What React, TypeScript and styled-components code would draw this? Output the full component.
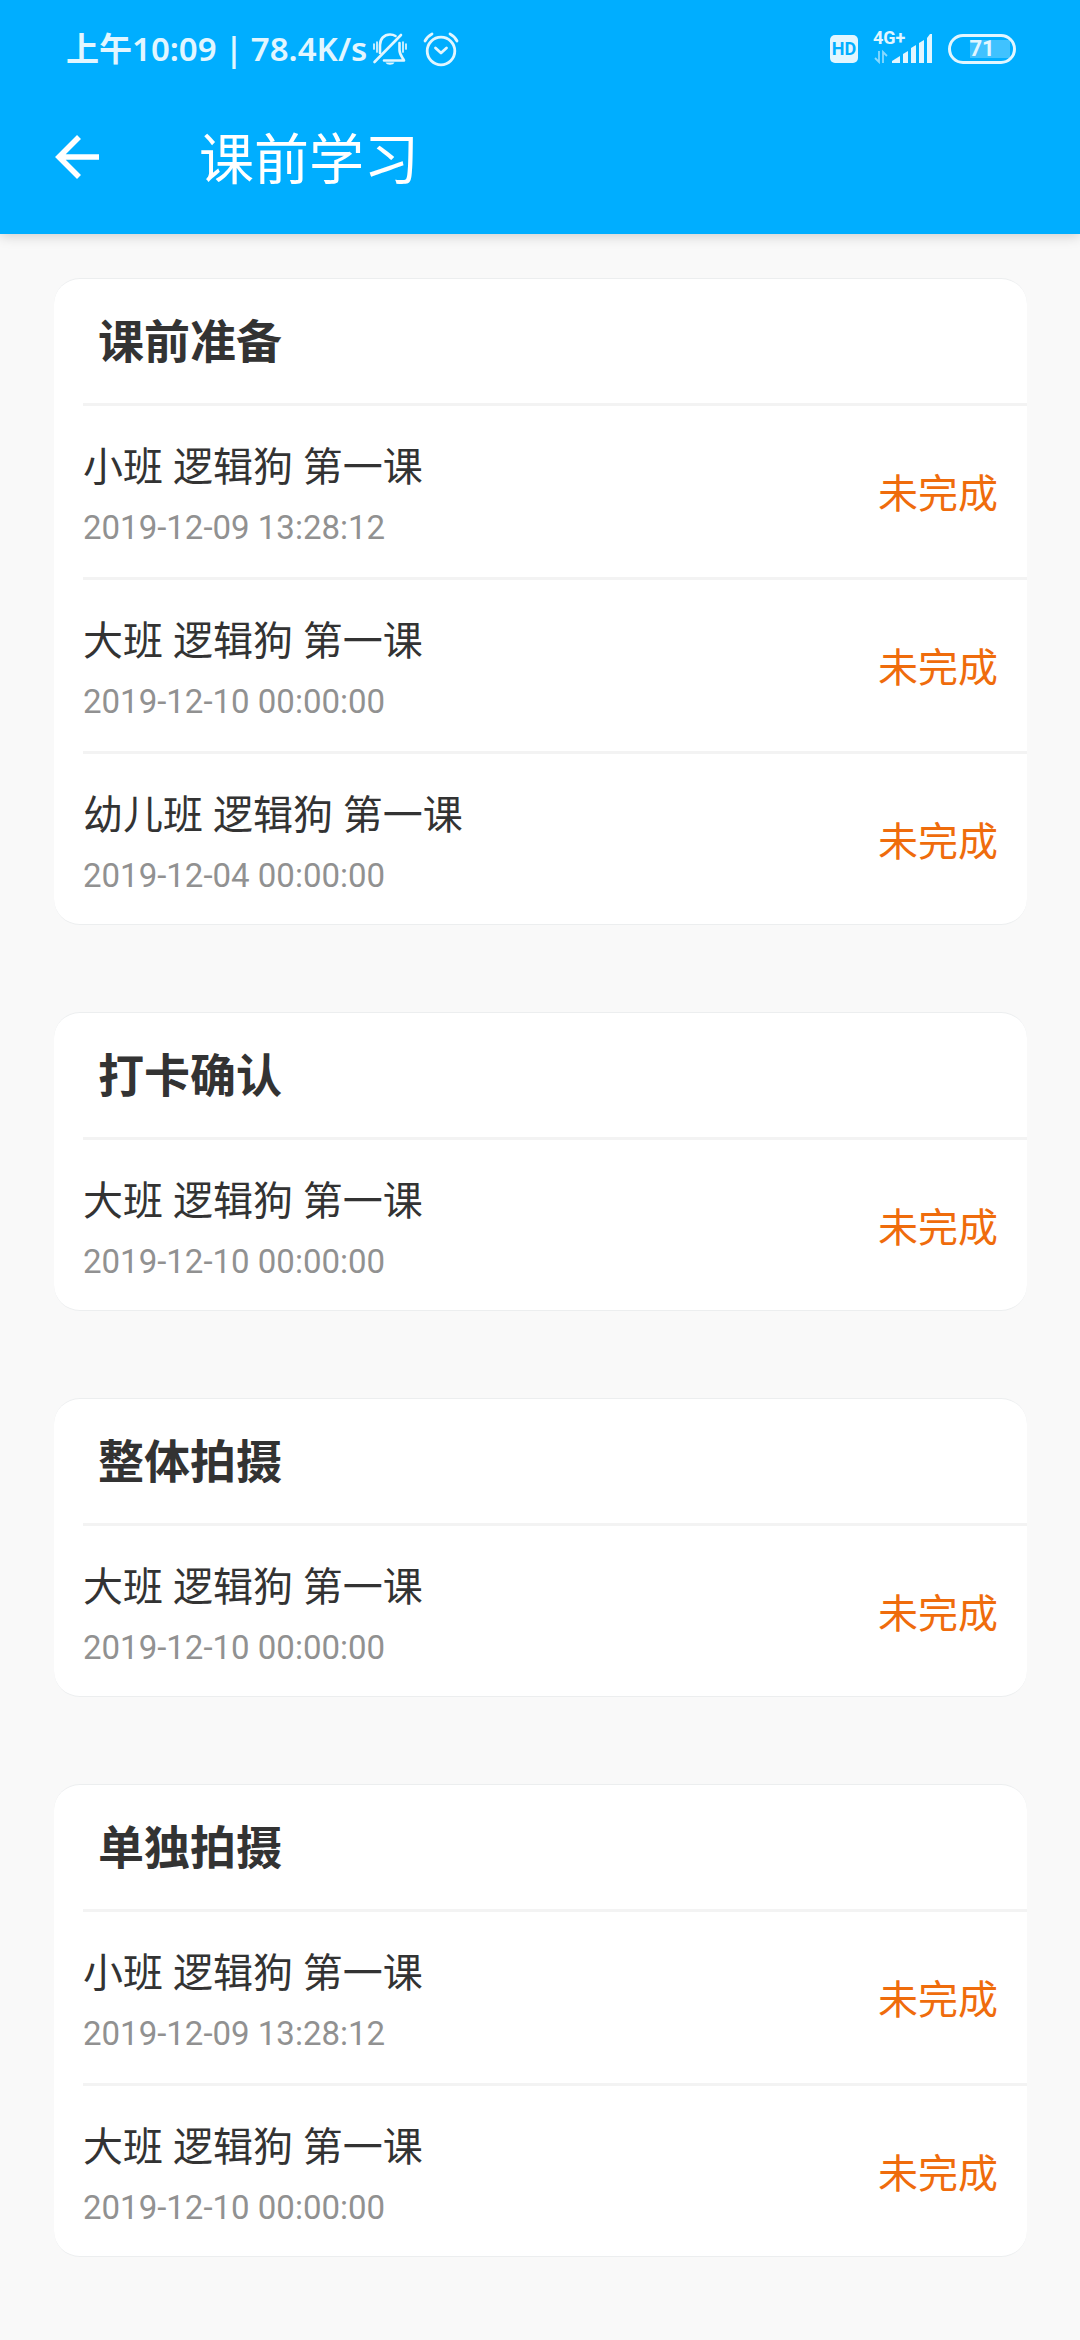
import React from "react";
import styled, { createGlobalStyle } from "styled-components";

const GlobalStyle = createGlobalStyle`
  * { box-sizing: border-box; }
  body {
    margin: 0;
    background: #f9f9f9;
    color: #333333;
    font-family: Roboto, "Noto Sans CJK SC", sans-serif;
  }
`;

const Page = styled.div`
  min-height: 100vh;
  background: #f9f9f9;
`;

const TopBar = styled.header`
  background: #00aeff;
  color: #ffffff;
  box-shadow: 0 2px 12px rgba(0, 0, 0, 0.18);
`;

const StatusBar = styled.div`
  display: flex;
  align-items: center;
  justify-content: space-between;
  height: 98px;
  padding: 0 64px 0 66px;
  color: #e2f6ff;
  font-family: "Noto Sans", "Noto Sans CJK SC", sans-serif;
`;

const StatusGroup = styled.div`
  display: flex;
  align-items: center;
`;

const StatusText = styled.div`
  display: flex;
  gap: 8px;
  font-size: 33px;
  font-weight: 600;
  line-height: 48px;
  white-space: nowrap;
`;

const StatusIcon = styled.svg<{ $gap: number }>`
  display: block;
  margin-left: ${(p) => p.$gap}px;
`;

const HdBadge = styled.span`
  display: flex;
  align-items: center;
  justify-content: center;
  width: 28px;
  height: 28px;
  border-radius: 5px;
  background: #e2f6ff;
  color: #00aeff;
  font-family: Roboto, sans-serif;
  font-size: 18px;
  font-weight: 700;
  line-height: 28px;
`;

const Network = styled.div`
  display: flex;
  flex-direction: column;
  width: 60px;
  margin-left: 15px;
`;

const NetworkLabel = styled.span`
  height: 0;
  font-family: Roboto, sans-serif;
  font-size: 18px;
  font-weight: 700;
  line-height: 8px;
`;

const Battery = styled.div`
  display: flex;
  align-items: center;
  justify-content: center;
  width: 68px;
  height: 30px;
  margin-left: 15px;
  border: 3px solid #e2f6ff;
  border-radius: 15px;
  background: linear-gradient(#40c2ff, #40c2ff) 19px 3px / 40px 18px no-repeat;
  font-family: Roboto, sans-serif;
  font-size: 22px;
  font-weight: 700;
  line-height: 24px;
`;

const TitleBar = styled.div`
  display: flex;
  align-items: center;
  gap: 91px;
  height: 136px;
  padding: 0 48px 18px;
`;

const BackButton = styled.button`
  display: flex;
  padding: 0;
  border: 0;
  background: none;
  color: inherit;
  cursor: pointer;
`;

const PageTitle = styled.h1`
  margin: 0;
  padding-top: 6px;
  font-size: 55px;
  font-weight: 400;
  line-height: 80px;
`;

const Sections = styled.main`
  display: flex;
  flex-direction: column;
  gap: 87px;
  padding: 44px 53px 82px 54px;
`;

const Card = styled.section`
  border: solid #eceeef;
  border-width: 1px 0;
  border-radius: 26px;
  background: #ffffff;
`;

const CardTitle = styled.h2`
  margin: 0;
  padding: 29px 44px 27px;
  font-size: 46px;
  font-weight: 700;
  line-height: 68px;
`;

const Lessons = styled.ul`
  margin: 0;
  padding: 0 0 0 29px;
  list-style: none;
`;

const Lesson = styled.li`
  display: flex;
  align-items: center;
  justify-content: space-between;
  height: 174px;
  padding: 7px 29px 0 0;
  border-top: 3px solid #f3f3f3;

  &:last-child {
    height: 173px;
  }
`;

const LessonInfo = styled.div`
  display: flex;
  flex-direction: column;
  gap: 6px;
`;

const LessonName = styled.span`
  font-size: 40px;
  line-height: 60px;
`;

const LessonTime = styled.time`
  color: #919191;
  font-size: 33px;
  line-height: 48px;
`;

const LessonStatus = styled.span`
  color: #ef6c0c;
  font-size: 40px;
  line-height: 60px;
`;

type LessonData = { name: string; time: string };
type SectionData = { title: string; lessons: LessonData[] };

const small: LessonData = { name: "小班 逻辑狗 第一课", time: "2019-12-09 13:28:12" };
const big: LessonData = { name: "大班 逻辑狗 第一课", time: "2019-12-10 00:00:00" };
const infant: LessonData = { name: "幼儿班 逻辑狗 第一课", time: "2019-12-04 00:00:00" };

const sections: SectionData[] = [
  { title: "课前准备", lessons: [small, big, infant] },
  { title: "打卡确认", lessons: [big] },
  { title: "整体拍摄", lessons: [big] },
  { title: "单独拍摄", lessons: [small, big] },
];

function MutedBell() {
  return (
    <StatusIcon $gap={5} width="36" height="36" viewBox="0 0 36 36" fill="none" stroke="currentColor" strokeWidth="2.6" strokeLinecap="round" strokeLinejoin="round">
      <path d="M2.500 31 L29 4" />
      <path d="M8 22 V14 C8 8 12 3.500 18 3.500 C20 3.500 22 4 23.500 5" />
      <path d="M27.500 12 V19 C27.500 24 31 27 32 29.500 H12" />
      <path d="M2 13 V18 M5 11 V21 M31 11 V21 M34 13 V18" strokeWidth="1.700" />
      <path d="M13.500 31.500 H22.500 C21 34.500 15 34.500 13.500 31.500 Z" fill="currentColor" stroke="none" />
    </StatusIcon>
  );
}

function AlarmClock() {
  return (
    <StatusIcon $gap={15} width="36" height="36" viewBox="0 0 36 36" fill="none" stroke="currentColor" strokeWidth="2.800" strokeLinecap="round" strokeLinejoin="round">
      <circle cx="18" cy="20" r="13.800" />
      <path d="M12.500 17 L18 22 L23.500 17" />
      <path d="M2 10 C3.500 7 6 4.500 9 3 M34 10 C32.500 7 30 4.500 27 3" />
    </StatusIcon>
  );
}

function SignalBars() {
  return (
    <svg width="60" height="30" viewBox="0 0 60 30" fill="currentColor">
      <path d="M19 29 V27 L27 22 V29 Z" />
      <path d="M30 29 V20 L35 17 V29 Z" />
      <path d="M38 29 V14 L43 11 V29 Z" />
      <path d="M46 29 V9 L51 6 V29 Z" />
      <path d="M54 29 V4 L57 0 H59 V29 Z" />
      <path d="M6 17 V28 L2 24 M10 29 V18 L14 22" fill="none" stroke="currentColor" strokeWidth="1.800" opacity="0.6" />
    </svg>
  );
}

function BackArrow() {
  return (
    <svg width="60" height="60" viewBox="0 0 60 60" fill="none" stroke="currentColor" strokeWidth="5.600">
      <path d="M51 30 H11 M31 10 L11 30 L31 50" />
    </svg>
  );
}

export default function App() {
  return (
    <Page>
      <GlobalStyle />
      <TopBar>
        <StatusBar>
          <StatusGroup>
            <StatusText>
              <span>上午10:09</span>
              <span>|</span>
              <span>78.4K/s</span>
            </StatusText>
            <MutedBell />
            <AlarmClock />
          </StatusGroup>
          <StatusGroup>
            <HdBadge>HD</HdBadge>
            <Network>
              <NetworkLabel>4G+</NetworkLabel>
              <SignalBars />
            </Network>
            <Battery>71</Battery>
          </StatusGroup>
        </StatusBar>
        <TitleBar>
          <BackButton type="button" aria-label="返回">
            <BackArrow />
          </BackButton>
          <PageTitle>课前学习</PageTitle>
        </TitleBar>
      </TopBar>
      <Sections>
        {sections.map((section) => (
          <Card key={section.title}>
            <CardTitle>{section.title}</CardTitle>
            <Lessons>
              {section.lessons.map((lesson) => (
                <Lesson key={lesson.name}>
                  <LessonInfo>
                    <LessonName>{lesson.name}</LessonName>
                    <LessonTime>{lesson.time}</LessonTime>
                  </LessonInfo>
                  <LessonStatus>未完成</LessonStatus>
                </Lesson>
              ))}
            </Lessons>
          </Card>
        ))}
      </Sections>
    </Page>
  );
}
